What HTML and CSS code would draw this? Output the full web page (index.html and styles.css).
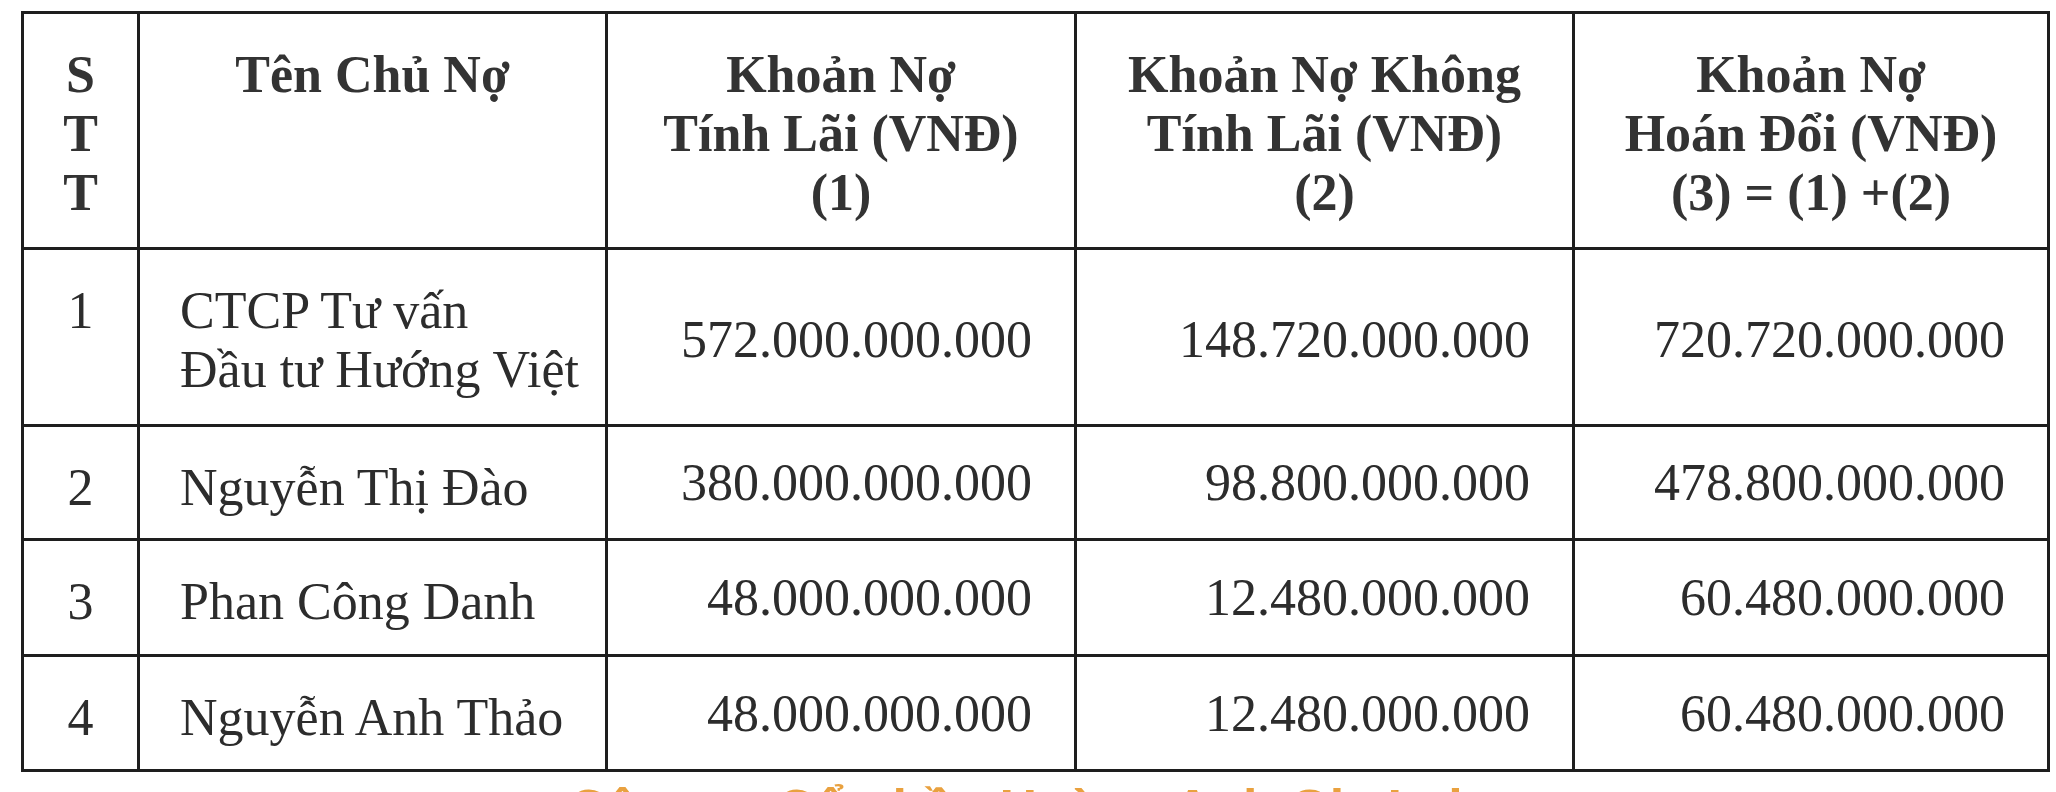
FILE: index.html
```html
<!DOCTYPE html>
<html lang="vi">
<head>
<meta charset="utf-8">
<title>Bảng khoản nợ</title>
<link rel="stylesheet" href="styles.css">
</head>
<body>
<div class="page">
  <table class="debt">
    <colgroup>
      <col class="c-stt"><col class="c-name"><col class="c-n1"><col class="c-n2"><col class="c-n3">
    </colgroup>
    <thead>
      <tr class="r-head">
        <th class="stt">S<br>T<br>T</th>
        <th>Tên Chủ Nợ</th>
        <th>Khoản Nợ<br>Tính Lãi (VNĐ)<br>(1)</th>
        <th>Khoản Nợ Không<br>Tính Lãi (VNĐ)<br>(2)</th>
        <th>Khoản Nợ<br>Hoán Đổi (VNĐ)<br>(3) = (1) +(2)</th>
      </tr>
    </thead>
    <tbody>
      <tr class="r-1">
        <td class="stt">1</td>
        <td class="name">CTCP Tư vấn<br>Đầu tư Hướng Việt</td>
        <td class="num">572.000.000.000</td>
        <td class="num">148.720.000.000</td>
        <td class="num">720.720.000.000</td>
      </tr>
      <tr class="r-2">
        <td class="stt">2</td>
        <td class="name">Nguyễn Thị Đào</td>
        <td class="num">380.000.000.000</td>
        <td class="num">98.800.000.000</td>
        <td class="num">478.800.000.000</td>
      </tr>
      <tr class="r-3">
        <td class="stt">3</td>
        <td class="name">Phan Công Danh</td>
        <td class="num">48.000.000.000</td>
        <td class="num">12.480.000.000</td>
        <td class="num">60.480.000.000</td>
      </tr>
      <tr class="r-4">
        <td class="stt">4</td>
        <td class="name">Nguyễn Anh Thảo</td>
        <td class="num">48.000.000.000</td>
        <td class="num">12.480.000.000</td>
        <td class="num">60.480.000.000</td>
      </tr>
    </tbody>
  </table>
  <div class="caption">Công ty Cổ phần Hoàng Anh Gia Lai</div>
</div>
</body>
</html>
```
FILE: styles.css
```css
html, body {
  margin: 0;
  padding: 0;
  background: #ffffff;
}
body {
  height: 792px;
  overflow: hidden;
  font-family: "Liberation Serif", "Times New Roman", serif;
  color: #2c2c2c;
}
.page {
  padding: 11px 0 0 21px;
}
.debt {
  border-collapse: collapse;
  table-layout: fixed;
  width: 2026px;
  border: 3px solid #1e1e1e;
}
.c-stt { width: 116px; }
.c-name { width: 468px; }
.c-n1 { width: 469px; }
.c-n2 { width: 498px; }
.c-n3 { width: 475px; }

.debt th, .debt td {
  border: 3px solid #1e1e1e;
  padding: 31px 0 0 0;
  vertical-align: top;
  font-size: 52px;
  line-height: 59px;
}
.debt th {
  font-weight: bold;
  text-align: center;
  color: #333333;
}
.r-head { height: 236px; }
.r-1 { height: 177px; }
.r-2 { height: 114px; }
.r-3 { height: 116px; }
.r-4 { height: 115px; }

.debt td.stt, .debt th.stt {
  text-align: center;
}
.debt td.name {
  text-align: left;
  padding-left: 40px;
}
.debt td.num {
  text-align: right;
  padding: 0 42px 0 0;
  vertical-align: middle;
}
.r-1 td.num {
  padding-top: 4px;
}
.caption {
  margin-top: 6px;
  padding-left: 548px;
  font-size: 52px;
  font-weight: bold;
  line-height: 60px;
  color: #e9a13f;
  font-family: "Liberation Sans", Arial, sans-serif;
}
```
